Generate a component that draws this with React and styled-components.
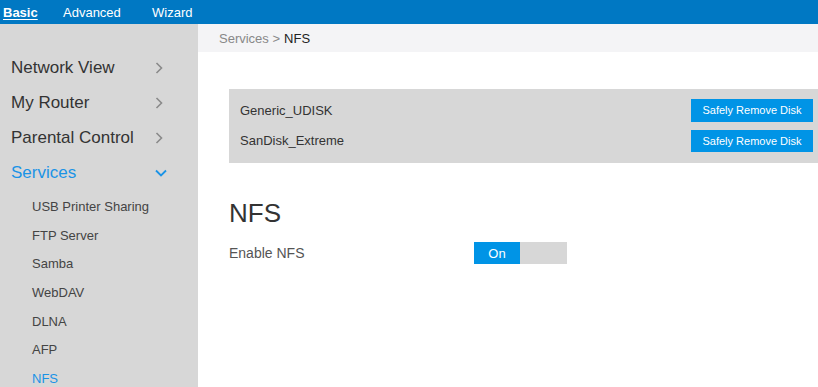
import React from 'react';
import styled, { createGlobalStyle } from 'styled-components';

const GlobalStyle = createGlobalStyle`
  html, body {
    margin: 0;
    padding: 0;
    background: #ffffff;
    font-family: "Liberation Sans", Arial, sans-serif;
  }
`;

const Page = styled.div`
  width: 818px;
  height: 387px;
  display: flex;
  flex-direction: column;
  overflow: hidden;
`;

const TopBar = styled.div`
  height: 24px;
  flex: none;
  background: #0078c3;
  display: flex;
  align-items: center;
  padding-left: 3px;
`;

const NavLink = styled.div`
  width: ${({ $w }) => $w}px;
  color: #ffffff;
  font-size: 13px;
  font-weight: ${({ $active }) => ($active ? 'bold' : 'normal')};
  text-decoration: ${({ $active }) => ($active ? 'underline' : 'none')};
  text-underline-offset: 2px;
`;

const Body = styled.div`
  flex: 1;
  display: flex;
  min-height: 0;
`;

const Sidebar = styled.div`
  width: 198px;
  flex: none;
  background: #d7d7d7;
  padding-top: 26px;
  box-sizing: border-box;
`;

const MenuItem = styled.div`
  height: 35px;
  display: flex;
  align-items: center;
  padding-left: 11px;
  font-size: 17px;
  color: ${({ $active }) => ($active ? '#1a93e6' : '#333333')};
`;

const MenuLabel = styled.span`
  width: 144px;
`;

const SubList = styled.div`
  padding-top: 2px;
`;

const SubItem = styled.div`
  height: 28.7px;
  display: flex;
  align-items: center;
  padding-left: 32px;
  font-size: 13px;
  color: ${({ $active }) => ($active ? '#1a93e6' : '#444444')};
`;

const Main = styled.div`
  flex: 1;
  display: flex;
  flex-direction: column;
`;

const Breadcrumb = styled.div`
  height: 28px;
  background: #f4f4f6;
  display: flex;
  align-items: center;
  padding-left: 21px;
  font-size: 13px;
  color: #888888;
`;

const Current = styled.span`
  color: #222222;
  margin-left: 4px;
`;

const DiskPanel = styled.div`
  margin: 37px 0 0 31px;
  height: 74px;
  box-sizing: border-box;
  background: #d7d7d7;
  padding: 10px 5px 0 11px;
  display: flex;
  flex-direction: column;
  gap: 8px;
`;

const DiskRow = styled.div`
  height: 22.5px;
  display: flex;
  align-items: center;
  justify-content: space-between;
  font-size: 13px;
  color: #333333;
`;

const RemoveButton = styled.button`
  width: 122px;
  height: 22.5px;
  border: none;
  background: #0094e6;
  color: #ffffff;
  font-family: inherit;
  font-size: 11px;
  padding: 0;
`;

const Section = styled.div`
  padding: 35px 0 0 31px;
`;

const Heading = styled.h1`
  margin: 0;
  font-size: 26px;
  line-height: 30px;
  font-weight: normal;
  color: #333333;
`;

const FieldRow = styled.div`
  margin-top: 14px;
  display: flex;
  align-items: center;
`;

const FieldLabel = styled.div`
  width: 245px;
  font-size: 14px;
  color: #555555;
`;

const Toggle = styled.div`
  display: flex;
  width: 93px;
  height: 22px;
  background: #d7d7d7;
`;

const ToggleOn = styled.div`
  width: 46px;
  background: #0094e6;
  color: #ffffff;
  font-size: 13px;
  display: flex;
  align-items: center;
  justify-content: center;
`;

const Chevron = ({ down }) =>
  down ? (
    <svg width="12" height="8" viewBox="0 0 12 8">
      <path d="M1 1.5 L6 6.5 L11 1.5" fill="none" stroke="#1a93e6" strokeWidth="1.8" />
    </svg>
  ) : (
    <svg width="8" height="12" viewBox="0 0 8 12">
      <path d="M1.5 1 L6.5 6 L1.5 11" fill="none" stroke="#8a8a8a" strokeWidth="1.6" />
    </svg>
  );

const menu = ['Network View', 'My Router', 'Parental Control'];
const subItems = ['USB Printer Sharing', 'FTP Server', 'Samba', 'WebDAV', 'DLNA', 'AFP', 'NFS'];
const disks = ['Generic_UDISK', 'SanDisk_Extreme'];

const App = () => (
  <Page>
    <GlobalStyle />
    <TopBar>
      <NavLink $w={60} $active>Basic</NavLink>
      <NavLink $w={89}>Advanced</NavLink>
      <NavLink $w={60}>Wizard</NavLink>
    </TopBar>
    <Body>
      <Sidebar>
        {menu.map((m) => (
          <MenuItem key={m}>
            <MenuLabel>{m}</MenuLabel>
            <Chevron />
          </MenuItem>
        ))}
        <MenuItem $active>
          <MenuLabel>Services</MenuLabel>
          <Chevron down />
        </MenuItem>
        <SubList>
          {subItems.map((s) => (
            <SubItem key={s} $active={s === 'NFS'}>{s}</SubItem>
          ))}
        </SubList>
      </Sidebar>
      <Main>
        <Breadcrumb>
          Services &gt;<Current>NFS</Current>
        </Breadcrumb>
        <DiskPanel>
          {disks.map((d) => (
            <DiskRow key={d}>
              {d}
              <RemoveButton>Safely Remove Disk</RemoveButton>
            </DiskRow>
          ))}
        </DiskPanel>
        <Section>
          <Heading>NFS</Heading>
          <FieldRow>
            <FieldLabel>Enable NFS</FieldLabel>
            <Toggle>
              <ToggleOn>On</ToggleOn>
            </Toggle>
          </FieldRow>
        </Section>
      </Main>
    </Body>
  </Page>
);

export default App;
